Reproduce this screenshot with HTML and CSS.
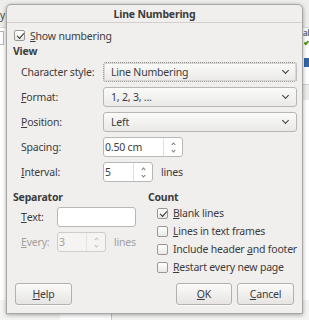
FILE: index.html
```html
<!DOCTYPE html>
<html>
<head>
<meta charset="utf-8">
<link rel="stylesheet" href="styles.css">
</head>
<body>
<div class="app">
  <div class="app-toolbar"></div>
  <div class="app-left"><span class="app-y">y</span><span class="app-box"></span></div>
  <div class="app-right"><span class="app-ab">ab</span><span class="app-check"></span><span class="app-blue"></span><span class="app-band"></span></div>
  <div class="app-bottom"><span class="col-a"></span><span class="col-b"></span></div>
</div>
<div class="dialog">
  <div class="titlebar">Line Numbering</div>
  <div class="content">
    <div class="check top-check"><span class="box checked"></span><span><u>S</u>how numbering</span></div>
    <div class="section-title">View</div>
    <div class="view-grid">
      <span class="lbl">Character style:</span>
      <div class="combo focus"><span>Line Numbering</span><span class="chev"></span></div>
      <span class="lbl"><u>F</u>ormat:</span>
      <div class="combo"><span>1, 2, 3, ...</span><span class="chev"></span></div>
      <span class="lbl"><u>P</u>osition:</span>
      <div class="combo"><span>Left</span><span class="chev"></span></div>
      <span class="lbl">Spacing:</span>
      <div class="field-row"><div class="spin spin-wide"><span class="val">0.50 cm</span><span class="arrows"><span class="up"></span><span class="dn"></span></span></div></div>
      <span class="lbl"><u>I</u>nterval:</span>
      <div class="field-row"><div class="spin spin-narrow"><span class="val">5</span><span class="arrows"><span class="up"></span><span class="dn"></span></span></div><span class="unit">lines</span></div>
    </div>
    <div class="lower">
      <div class="sep-col">
        <div class="section-title">Separator</div>
        <div class="sep-grid">
          <span class="lbl"><u>T</u>ext:</span>
          <div class="entry"></div>
          <span class="lbl disabled"><u>E</u>very:</span>
          <div class="field-row"><div class="spin spin-sep disabled"><span class="val">3</span><span class="arrows"><span class="up"></span><span class="dn"></span></span></div><span class="unit disabled">lines</span></div>
        </div>
      </div>
      <div class="count-col">
        <div class="section-title">Count</div>
        <div class="count-list">
          <div class="check"><span class="box checked"></span><span><u>B</u>lank lines</span></div>
          <div class="check"><span class="box"></span><span><u>L</u>ines in text frames</span></div>
          <div class="check"><span class="box"></span><span>Include header <u>a</u>nd footer</span></div>
          <div class="check"><span class="box"></span><span><u>R</u>estart every new page</span></div>
        </div>
      </div>
    </div>
    <div class="buttons">
      <button class="btn btn-help"><u>H</u>elp</button>
      <span class="spacer"></span>
      <button class="btn btn-ok"><u>O</u>K</button>
      <button class="btn btn-cancel"><u>C</u>ancel</button>
    </div>
  </div>
</div>
</body>
</html>
```

FILE: styles.css
```css
* { box-sizing: border-box; margin: 0; padding: 0; }
body {
  margin: 0;
  width: 309px;
  height: 320px;
  overflow: hidden;
  position: relative;
  background: #ffffff;
  font-family: "Noto Sans", "DejaVu Sans", sans-serif;
  font-size: 10.5px;
  letter-spacing: -0.2px;
  color: #3c3c3c;
}
u { text-decoration: underline; text-underline-offset: 1px; }

/* background application */
.app { position: absolute; inset: 0; }
.app-toolbar { position: absolute; left: 0; top: 0; width: 309px; height: 28px; background: #eeeeec; border-bottom: 1px solid #d8d8d6; }
.app-left { position: absolute; left: 0; top: 0; width: 6px; height: 320px; }
.app-y { position: absolute; left: 0; top: 8px; font-size: 10px; color: #444; }
.app-box { position: absolute; left: -4px; top: 31px; width: 8px; height: 14px; border: 1px solid #b8b8b8; background: #fff; }
.app-right { position: absolute; left: 303px; top: 0; width: 6px; height: 320px; overflow: hidden; }
.app-ab { position: absolute; left: 0; top: 27px; font-size: 8px; color: #333; }
.app-check { position: absolute; left: 1px; top: 41px; width: 5px; height: 3px; border-left: 2px solid #4e9a06; border-bottom: 2px solid #4e9a06; transform: rotate(-45deg); }
.app-blue { position: absolute; left: 1px; top: 58px; width: 5px; height: 9px; background: #3465a4; }
.app-band { position: absolute; left: 0; top: 84px; width: 6px; height: 16px; background: #ededec; border-top: 1px solid #d0d0d0; }
.app-bottom { position: absolute; left: 0; top: 300px; width: 309px; height: 20px; background: #f4f4f3; }
.col-a { position: absolute; left: 60px; top: 0; width: 1px; height: 20px; background: #c8c8c8; }
.col-b { position: absolute; left: 60px; top: 0; width: 52px; height: 20px; background: #fff; border-right: 1px solid #c8c8c8; }

/* dialog window */
.dialog {
  position: absolute;
  left: 6px;
  top: 4px;
  width: 297px;
  height: 310px;
  background: #f0efee;
  border: 1px solid #a8a6a2;
  border-radius: 5px 5px 0 0;
  box-shadow: 0 1px 4px rgba(0,0,0,.35);
  display: flex;
  flex-direction: column;
}
.titlebar {
  height: 18px;
  line-height: 19px;
  border-bottom: 1px solid #d2d0cc;
  text-align: center;
  font-weight: bold;
  color: #3c3c3c;
}
.content { padding: 5px 5px 0 6px; display: flex; flex-direction: column; }

.section-title { font-weight: bold; height: 15px; line-height: 15px; white-space: nowrap; }
.content > .section-title { margin-top: 1px; }

.check { display: flex; align-items: center; height: 15px; gap: 5px; white-space: nowrap; }
.top-check { padding-left: 1px; }
.box {
  width: 11px; height: 11px;
  border: 1px solid #9a9894;
  border-radius: 2px;
  background: linear-gradient(#ffffff, #e9e8e6);
  position: relative;
  flex: none;
}
.box.checked::after {
  content: "";
  position: absolute;
  left: 2px;
  top: 2px;
  width: 6px; height: 3px;
  border-left: 1.6px solid #333;
  border-bottom: 1.6px solid #333;
  transform: rotate(-48deg);
}

.view-grid {
  display: grid;
  grid-template-columns: 82px 1fr;
  grid-auto-rows: 20px;
  row-gap: 5px;
  margin-top: 3px;
  padding-left: 8px;
}
.lbl { display: flex; align-items: center; white-space: nowrap; }
.disabled { color: #a3a19d; }

.combo {
  display: flex;
  align-items: center;
  justify-content: space-between;
  padding: 0 7px 0 7px;
  border: 1px solid #b9b7b3;
  border-radius: 3px;
  background: linear-gradient(#fbfbfa, #eae9e7);
}
.combo.focus { border: 1px dotted #8e8c88; box-shadow: inset 0 0 0 1px #d8d6d2; }
.chev {
  width: 5px; height: 5px;
  border-right: 1px solid #3c3c3c;
  border-bottom: 1px solid #3c3c3c;
  transform: rotate(45deg);
  margin-top: -3px;
  margin-right: 1px;
}

.field-row { display: flex; align-items: center; gap: 7px; }
.spin {
  display: flex;
  height: 20px;
  border: 1px solid #b9b7b3;
  border-radius: 3px;
  background: #fff;
}
.spin .val { flex: 1; padding-left: 1px; display: flex; align-items: center; }
.spin .arrows {
  width: 19px;
  border-left: 1px solid #e2e0dd;
  display: flex; flex-direction: column; align-items: center; justify-content: center; gap: 3px;
}
.arrows .up, .arrows .dn {
  width: 3px; height: 3px;
  border-left: 1px solid #7a7875;
  border-top: 1px solid #7a7875;
  transform: rotate(45deg);
}
.arrows .dn { transform: rotate(225deg); }
.spin-wide { width: 80px; }
.spin-narrow { width: 50px; }
.spin-sep { width: 49px; height: 20px; background: #f5f4f3; border-color: #cfcdc9; }
.spin-sep .arrows { border-left-color: #e6e4e1; }
.spin-sep .up, .spin-sep .dn { border-color: #c4c2be; }
.unit { margin-left: 1px; }

.lower { display: flex; margin-top: 8px; }
.sep-col { width: 141px; }
.sep-grid {
  display: grid;
  grid-template-columns: 36px 79px;
  grid-auto-rows: 20px;
  row-gap: 5px;
  margin-top: 2px;
  padding-left: 8px;
}
.entry { border: 1px solid #b9b7b3; border-radius: 3px; background: #fff; }
.count-col { flex: 1; }
.count-list { display: flex; flex-direction: column; margin-top: -1px; padding-left: 9px; }
.count-list .check { height: 18px; }

.buttons { display: flex; gap: 5px; margin-top: 7px; padding: 0 3px 0 2px; }
.spacer { flex: 1; }
.btn {
  height: 22px;
  border: 1px solid #b3b1ad;
  border-radius: 3px;
  background: linear-gradient(#fafaf9, #e6e5e3);
  font: inherit;
  letter-spacing: inherit;
  color: #3c3c3c;
  box-shadow: 0 1px 0 rgba(255,255,255,.6);
}
.btn-help { width: 57px; }
.btn-ok { width: 56px; }
.btn-cancel { width: 57px; }
```
